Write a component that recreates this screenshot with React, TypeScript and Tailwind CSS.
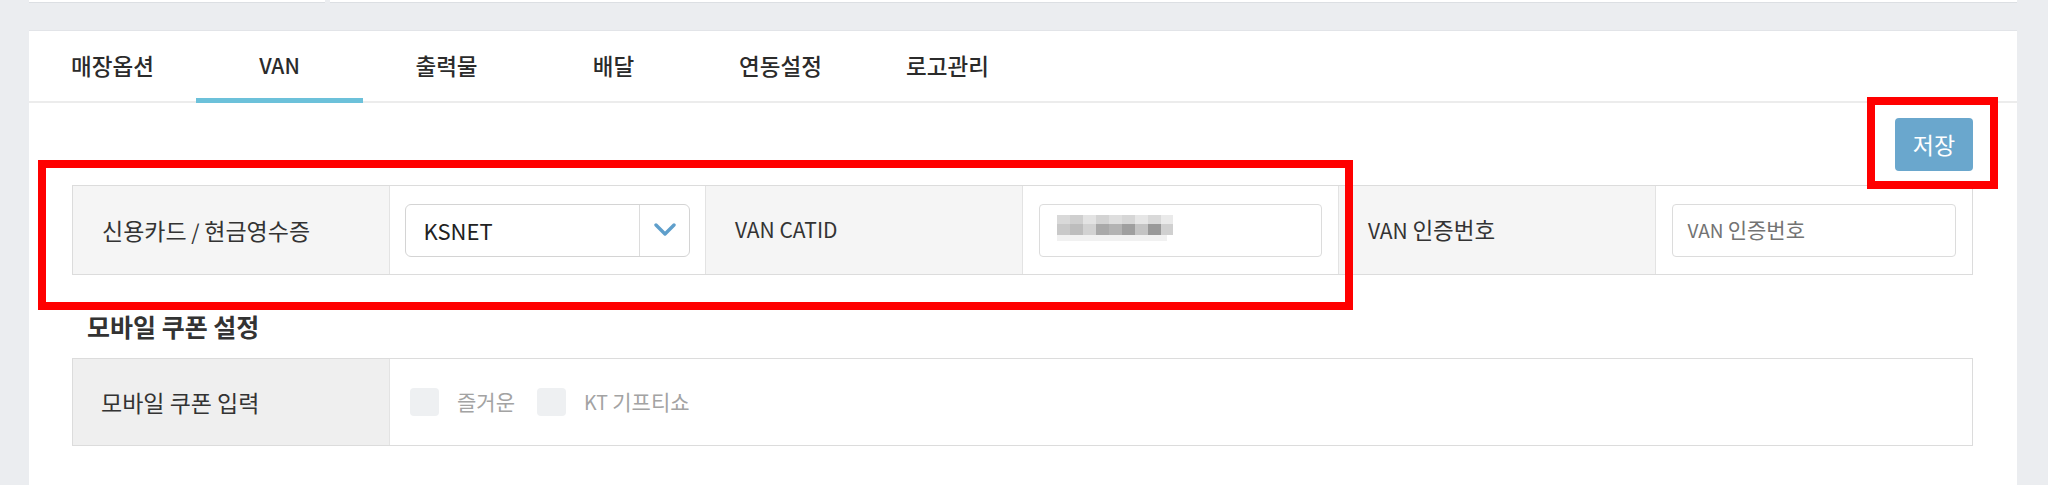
import React from "react";

const tabs = ["매장옵션", "VAN", "출력물", "배달", "연동설정", "로고관리"];

// Hangul in the reference runs a bit larger than the Latin text beside it
function Mixed({ text, ko, en }: { text: string; ko: string; en: string }) {
  const parts = text.split(/([A-Za-z0-9/ ]+)/).filter(Boolean);
  return (
    <span className="whitespace-pre">
      {parts.map((p, i) =>
        /[A-Za-z0-9/]/.test(p) || p.trim() === "" ? (
          <span key={i} className={en}>{p}</span>
        ) : (
          <span key={i} className={ko}>{p}</span>
        )
      )}
    </span>
  );
}

function Chevron() {
  return (
    <svg width="22" height="14" viewBox="0 0 22 14" fill="none">
      <polyline points="2,2 11,11 20,2" stroke="#5f9fcb" strokeWidth="3.4" strokeLinecap="round" strokeLinejoin="round" />
    </svg>
  );
}

// mosaic blur over the CATID value
function Mosaic() {
  const top = ["#d9d9d9", "#cfcfcf", "#e3e3e3", "#d3d3d3", "#dedede", "#d6d6d6", "#e6e6e6", "#d9d9d9", "#eaeaea"];
  const mid = ["#c9c9c9", "#bdbdbd", "#d2d2d2", "#a9a9a9", "#b3b3b3", "#9f9f9f", "#c4c4c4", "#999999", "#d0d0d0"];
  return (
    <svg width="116" height="30" viewBox="0 0 116 30">
      {top.map((c, i) => (
        <rect key={"t" + i} x={i * 13} y="0" width="13" height="9" fill={c} />
      ))}
      {mid.map((c, i) => (
        <rect key={"m" + i} x={i * 13} y="9" width="13" height="11" fill={c} />
      ))}
      <rect x="0" y="20" width="110" height="6" fill="#f1f1f1" />
    </svg>
  );
}

export default function App() {
  return (
    <div
      className="relative w-full h-[485px] overflow-hidden bg-[#ebedf0] text-[#333]"
      style={{ fontFamily: '"Noto Sans CJK KR", "Noto Sans", sans-serif' }}
    >
      {/* top boxes */}
      <div className="flex gap-[5px] pl-[29px] pr-[31px]">
        <div className="h-[3px] w-[296px] bg-white border-b border-[#dcdfe3]" />
        <div className="h-[3px] flex-1 bg-white border-b border-[#dcdfe3]" />
      </div>

      {/* card */}
      <div className="mt-[27px] ml-[29px] w-[1988px] h-[460px] bg-white border-t border-[#e2e4e8]">
        {/* tabs */}
        <div className="flex h-[72px] border-b-2 border-[#ececec]">
          {tabs.map((t, i) => (
            <div key={t} className="relative w-[167px] flex items-center justify-center font-medium text-[#2b2b2b]">
              <Mixed text={t} ko="text-[22.5px]" en="text-[21px]" />
              {i === 1 && <div className="absolute left-0 right-0 -bottom-[2px] h-[5px] bg-[#6cc1da]" />}
            </div>
          ))}
        </div>

        <div className="pl-[43px] pr-[44px]">
          <div className="flex justify-end pt-[15px]">
            <button className="w-[78px] h-[53px] rounded-[4px] bg-[#6aa7cd] text-white text-[23px]">저장</button>
          </div>

          {/* VAN table */}
          <div className="mt-[14px] grid grid-cols-6 h-[90px] border border-[#dcdcdc]">
            <div className="flex items-center pl-[29px] bg-[#f5f5f5] border-r border-[#e3e3e3]">
              <Mixed text="신용카드 / 현금영수증" ko="text-[23px]" en="text-[21px]" />
            </div>
            <div className="flex items-center px-[15px] border-r border-[#e3e3e3]">
              <div className="flex w-full h-[53px] rounded-[6px] border border-[#d4d4d4] bg-white">
                <div className="flex-1 flex items-center pl-[18px] text-[22px] text-[#222]">KSNET</div>
                <div className="w-[50px] flex items-center justify-center border-l border-[#dcdcdc]">
                  <Chevron />
                </div>
              </div>
            </div>
            <div className="flex items-center pl-[29px] bg-[#f5f5f5] text-[21px] border-r border-[#e3e3e3]">VAN CATID</div>
            <div className="flex items-center px-[16px] border-r border-[#e3e3e3]">
              <div className="flex items-center w-full h-[53px] rounded-[4px] border border-[#dcdcdc] pl-[17px]">
                <Mosaic />
              </div>
            </div>
            <div className="flex items-center pl-[29px] bg-[#f5f5f5] border-r border-[#e3e3e3]">
              <Mixed text="VAN 인증번호" ko="text-[22.5px]" en="text-[21px]" />
            </div>
            <div className="flex items-center px-[16px]">
              <div className="flex items-center w-full h-[53px] rounded-[4px] border border-[#dcdcdc] pl-[15px] text-[#737373]">
                <Mixed text="VAN 인증번호" ko="text-[21px]" en="text-[19px]" />
              </div>
            </div>
          </div>

          {/* mobile coupon */}
          <div className="mt-[35px] pl-[15px] text-[25px] font-bold leading-[32px] text-[#333]">모바일 쿠폰 설정</div>
          <div className="mt-[16px] flex h-[88px] border border-[#dcdcdc]">
            <div className="w-[317px] flex items-center pl-[28px] bg-[#efefef] text-[23px] border-r border-[#e3e3e3]">모바일 쿠폰 입력</div>
            <div className="flex items-center pl-[20px] gap-[22px] text-[#a3a3a3]">
              <label className="flex items-center gap-[18px]">
                <span className="w-[29px] h-[28px] rounded-[4px] bg-[#eef0f2]" />
                <span className="text-[21px]">즐거운</span>
              </label>
              <label className="flex items-center gap-[18px]">
                <span className="w-[29px] h-[28px] rounded-[4px] bg-[#eef0f2]" />
                <Mixed text="KT 기프티쇼" ko="text-[21px]" en="text-[19.5px]" />
              </label>
            </div>
          </div>
        </div>
      </div>

      {/* red annotation boxes */}
      <div className="absolute left-[38px] top-[160px] w-[1315px] h-[150px] border-[8px] border-[#ff0000]" />
      <div className="absolute left-[1867px] top-[97px] w-[131px] h-[92px] border-[8px] border-[#ff0000]" />
    </div>
  );
}
